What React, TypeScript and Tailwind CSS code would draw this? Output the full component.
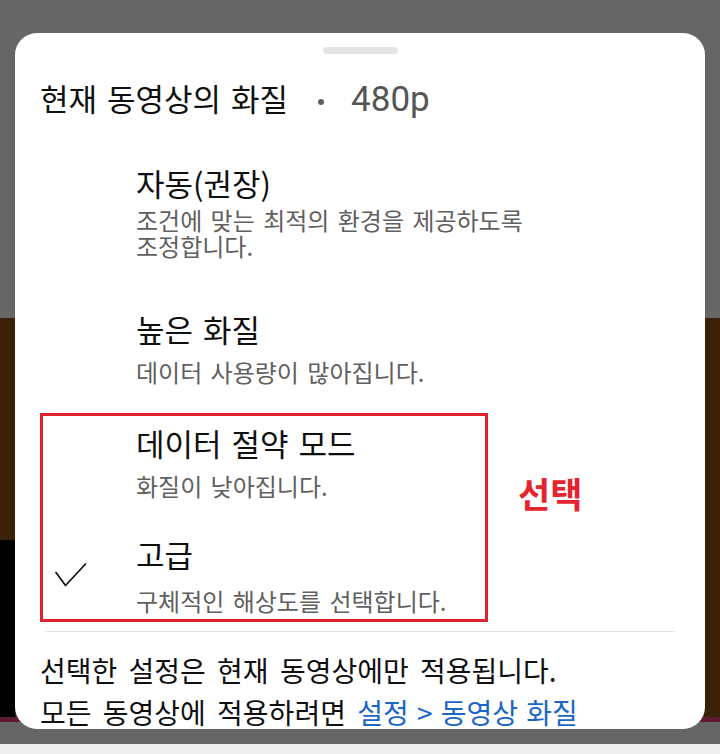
import React from "react";

type QualityOptionProps = {
  title: string;
  desc: string[];
  checked?: boolean;
  lead: string; // width of the check column
  descGap: string;
  className?: string;
};

const CheckMark: React.FC = () => (
  <svg width="32" height="24" viewBox="0 0 32 24" className="ml-[12px] mt-[29px]">
    <polyline
      points="1,9.5 10.5,22.5 30.5,1"
      fill="none"
      stroke="#111"
      strokeWidth="1.7"
      strokeLinecap="round"
      strokeLinejoin="round"
    />
  </svg>
);

const QualityOption: React.FC<QualityOptionProps> = ({ title, desc, checked, lead, descGap, className }) => (
  <div className={`flex ${className ?? ""}`}>
    <div className={`${lead} shrink-0`}>{checked && <CheckMark />}</div>
    <div className="flex flex-col">
      <div className="text-[31px] leading-[40px] text-[#0f0f0f]">{title}</div>
      <div className={`${descGap} text-[24px] leading-[26px] text-[#606060]`}>
        {desc.map((line) => (
          <div key={line}>{line}</div>
        ))}
      </div>
    </div>
  </div>
);

export default function App() {
  return (
    <div className="relative h-[754px] w-[720px] overflow-hidden font-['Noto_Sans_CJK_KR',sans-serif] [word-spacing:3px]">
      {/* video page behind the dimmed sheet */}
      <div className="flex h-full flex-col">
        <div className="h-[318px] bg-[#666666]" />
        <div className="flex h-[399px] flex-col bg-[#3a2208]">
          <div className="h-[222px]" />
          <div className="flex flex-1">
            <div className="w-[15px] bg-black" />
          </div>
        </div>
        <div className="h-[5px] bg-[#5e1a30]" />
        <div className="h-[22px] bg-[#666666]" />
        <div className="flex-1 bg-[#efefef]" />
      </div>

      {/* bottom sheet */}
      <div className="absolute left-[15px] top-[33px] h-[696px] w-[690px] overflow-hidden rounded-[22px] bg-white px-[25px] pt-[14px]">
        <div className="mx-auto h-[7px] w-[75px] rounded-full bg-[#e5e5e5]" />

        <div className="mt-[24px] flex h-[40px] items-baseline">
          <span className="text-[31px] leading-[40px] text-[#0f0f0f]">현재 동영상의 화질</span>
          <span className="ml-[30px] mr-[27px] mt-[8px] h-[6px] w-[6px] self-center rounded-full bg-[#606060]" />
          <span className="font-['Roboto',sans-serif] text-[35px] leading-[40px] text-[#555555]">480p</span>
        </div>

        <QualityOption
          className="mt-[45px]"
          lead="w-[96px]"
          descGap="mt-[4px]"
          title="자동(권장)"
          desc={["조건에 맞는 최적의 환경을 제공하도록", "조정합니다."]}
        />
        <QualityOption
          className="mt-[50px]"
          lead="w-[96px]"
          descGap="mt-[10px]"
          title="높은 화질"
          desc={["데이터 사용량이 많아집니다."]}
        />

        <div className="mt-[28px] flex items-start">
          <div className="w-[448px] border-[3px] border-[#e3202e] pb-[5px] pt-[7px]">
            <QualityOption lead="w-[93px]" descGap="mt-[10px]" title="데이터 절약 모드" desc={["화질이 낮아집니다."]} />
            <QualityOption
              className="mt-[35px]"
              lead="w-[93px]"
              descGap="mt-[14px]"
              title="고급"
              desc={["구체적인 해상도를 선택합니다."]}
              checked
            />
          </div>
          <div className="ml-[30px] mt-[60px] text-[35px] font-bold leading-[40px] text-[#e42530]">선택</div>
        </div>

        <div className="mx-[5px] mt-[9px] h-px bg-[#e3e3e3]" />

        <div className="mt-[17px] text-[28px] leading-[42px] text-[#0f0f0f] [word-spacing:5px]">
          <div>선택한 설정은 현재 동영상에만 적용됩니다.</div>
          <div>
            모든 동영상에 적용하려면 <span className="text-[#1a65c5] [word-spacing:2px]">설정 &gt; 동영상 화질</span>
          </div>
        </div>
      </div>
    </div>
  );
}
